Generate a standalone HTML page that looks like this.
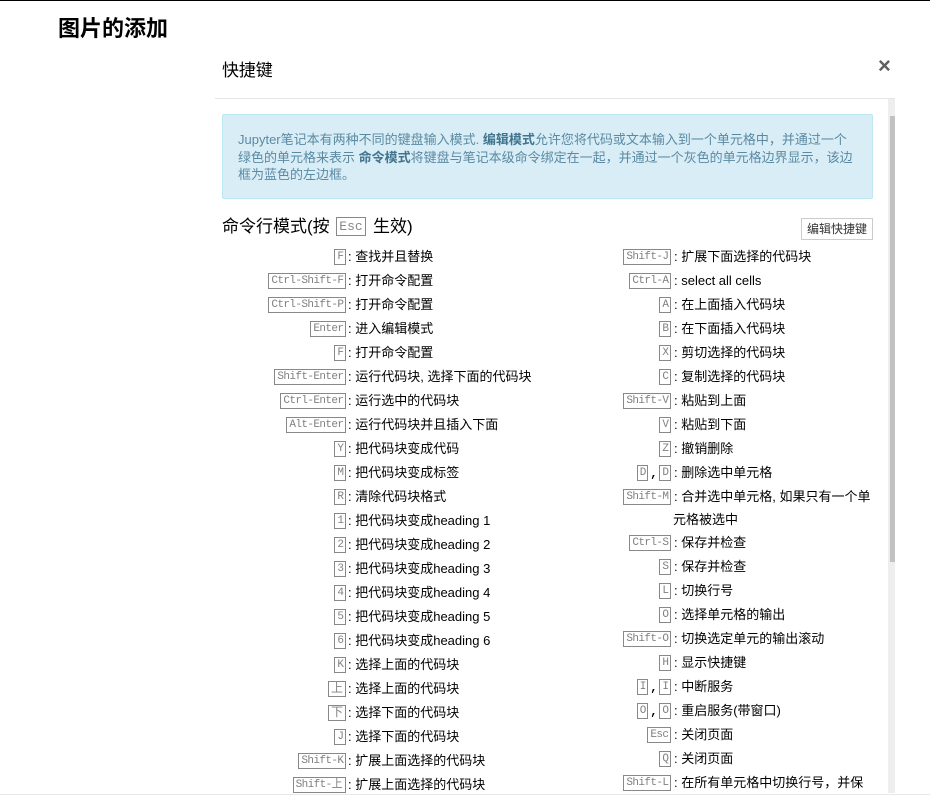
<!DOCTYPE html>
<html lang="zh">
<head>
<meta charset="utf-8">
<title>快捷键</title>
<style>
html,body{margin:0;padding:0;width:930px;height:796px;overflow:hidden;background:#fff}
body{position:relative;font-family:"Liberation Sans","Noto Sans CJK SC",sans-serif;font-size:13px;color:#000}
.abs{position:absolute;white-space:nowrap}
.a,.c{position:absolute;height:24px;line-height:24px;white-space:nowrap}
.a{left:215px}
.c{left:540px}
.a b,.c b{display:inline-block;width:131px;text-align:right;font-weight:normal}
.a b{margin-right:2px}
.c b{margin-right:3px}
kbd{display:inline-block;box-sizing:border-box;height:16px;padding:0 1.6px 0 2px;border:1px solid #888;color:#808080;font:11px/15px "Liberation Mono","Noto Sans CJK SC",monospace;letter-spacing:-.6px;vertical-align:middle;position:relative;top:-1px}
kbd.z{font-size:12px;letter-spacing:0;padding:0 2px}
i{display:inline-block;width:11px;text-align:center;font:bold 12px/14px "Liberation Mono",monospace;color:#000;vertical-align:middle}
</style>
</head>
<body>
<div class="abs" style="left:0;top:0;width:930px;height:1px;background:#000"></div>
<div class="abs" style="left:58px;top:13px;font-size:22px;line-height:32px;font-weight:bold">图片的添加</div>
<div class="abs" style="left:222px;top:59px;font-size:17px;line-height:24px;letter-spacing:-.1px">快捷键</div>
<div class="abs" style="left:878px;top:54px;font-size:22px;line-height:24px;font-weight:bold;color:#5f5f5f">×</div>
<div class="abs" style="left:215px;top:98px;width:680px;height:1px;background:#e5e5e5"></div>
<div class="abs" style="left:888px;top:99px;width:7px;height:697px;background:#eee"></div>
<div class="abs" style="left:890px;top:116px;width:5px;height:446px;background:#c1c1c1"></div>

<div class="abs" style="left:222px;top:114px;width:651px;height:85px;box-sizing:border-box;background:#d9edf7;border:1px solid #bce8f1;border-radius:2px"></div>
<div class="abs" style="left:238px;top:131px;line-height:18px;color:#5a8aa2">Jupyter笔记本有两种不同的键盘输入模式. <strong style="color:#41758d">编辑模式</strong>允许您将代码或文本输入到一个单元格中，并通过一个</div>
<div class="abs" style="left:238px;top:149px;line-height:18px;color:#5a8aa2">绿色的单元格来表示 <strong style="color:#41758d">命令模式</strong>将键盘与笔记本级命令绑定在一起，并通过一个灰色的单元格边界显示，该边</div>
<div class="abs" style="left:238px;top:166px;line-height:18px;color:#5a8aa2">框为蓝色的左边框。</div>

<div class="abs" style="left:222px;top:215px;font-size:17px;line-height:24px">命令行模式(按</div>
<div class="abs" style="left:336px;top:217px;width:30px;height:19px;box-sizing:border-box;border:1px solid #888;color:#888;font:13px/18px 'Liberation Mono',monospace;text-align:center">Esc</div>
<div class="abs" style="left:373px;top:215px;font-size:17px;line-height:24px">生效)</div>
<div class="abs" style="left:801px;top:218px;width:72px;height:22px;box-sizing:border-box;border:1px solid #ccc;color:#333;font-size:12px;line-height:20px;text-align:center">编辑快捷键</div>

<div class="a" style="top:245px"><b><kbd>F</kbd></b>: 查找并且替换</div>
<div class="a" style="top:269px"><b><kbd>Ctrl-Shift-F</kbd></b>: 打开命令配置</div>
<div class="a" style="top:293px"><b><kbd>Ctrl-Shift-P</kbd></b>: 打开命令配置</div>
<div class="a" style="top:317px"><b><kbd>Enter</kbd></b>: 进入编辑模式</div>
<div class="a" style="top:341px"><b><kbd>F</kbd></b>: 打开命令配置</div>
<div class="a" style="top:365px"><b><kbd>Shift-Enter</kbd></b>: 运行代码块, 选择下面的代码块</div>
<div class="a" style="top:389px"><b><kbd>Ctrl-Enter</kbd></b>: 运行选中的代码块</div>
<div class="a" style="top:413px"><b><kbd>Alt-Enter</kbd></b>: 运行代码块并且插入下面</div>
<div class="a" style="top:437px"><b><kbd>Y</kbd></b>: 把代码块变成代码</div>
<div class="a" style="top:461px"><b><kbd>M</kbd></b>: 把代码块变成标签</div>
<div class="a" style="top:485px"><b><kbd>R</kbd></b>: 清除代码块格式</div>
<div class="a" style="top:509px"><b><kbd>1</kbd></b>: 把代码块变成heading 1</div>
<div class="a" style="top:533px"><b><kbd>2</kbd></b>: 把代码块变成heading 2</div>
<div class="a" style="top:557px"><b><kbd>3</kbd></b>: 把代码块变成heading 3</div>
<div class="a" style="top:581px"><b><kbd>4</kbd></b>: 把代码块变成heading 4</div>
<div class="a" style="top:605px"><b><kbd>5</kbd></b>: 把代码块变成heading 5</div>
<div class="a" style="top:629px"><b><kbd>6</kbd></b>: 把代码块变成heading 6</div>
<div class="a" style="top:653px"><b><kbd>K</kbd></b>: 选择上面的代码块</div>
<div class="a" style="top:677px"><b><kbd class="z">上</kbd></b>: 选择上面的代码块</div>
<div class="a" style="top:701px"><b><kbd class="z">下</kbd></b>: 选择下面的代码块</div>
<div class="a" style="top:725px"><b><kbd>J</kbd></b>: 选择下面的代码块</div>
<div class="a" style="top:749px"><b><kbd>Shift-K</kbd></b>: 扩展上面选择的代码块</div>
<div class="a" style="top:773px"><b><kbd style="padding-right:3px">Shift-上</kbd></b>: 扩展上面选择的代码块</div>

<div class="c" style="top:245px"><b><kbd>Shift-J</kbd></b>: 扩展下面选择的代码块</div>
<div class="c" style="top:269px"><b><kbd>Ctrl-A</kbd></b>: select all cells</div>
<div class="c" style="top:293px"><b><kbd>A</kbd></b>: 在上面插入代码块</div>
<div class="c" style="top:317px"><b><kbd>B</kbd></b>: 在下面插入代码块</div>
<div class="c" style="top:341px"><b><kbd>X</kbd></b>: 剪切选择的代码块</div>
<div class="c" style="top:365px"><b><kbd>C</kbd></b>: 复制选择的代码块</div>
<div class="c" style="top:389px"><b><kbd>Shift-V</kbd></b>: 粘贴到上面</div>
<div class="c" style="top:413px"><b><kbd>V</kbd></b>: 粘贴到下面</div>
<div class="c" style="top:437px"><b><kbd>Z</kbd></b>: 撤销删除</div>
<div class="c" style="top:461px"><b><kbd>D</kbd><i>,</i><kbd>D</kbd></b>: 删除选中单元格</div>
<div class="c" style="top:485px"><b><kbd>Shift-M</kbd></b>: 合并选中单元格, 如果只有一个单</div>
<div class="abs" style="left:673px;top:508px;line-height:24px">元格被选中</div>
<div class="c" style="top:531px"><b><kbd>Ctrl-S</kbd></b>: 保存并检查</div>
<div class="c" style="top:555px"><b><kbd>S</kbd></b>: 保存并检查</div>
<div class="c" style="top:579px"><b><kbd>L</kbd></b>: 切换行号</div>
<div class="c" style="top:603px"><b><kbd>O</kbd></b>: 选择单元格的输出</div>
<div class="c" style="top:627px"><b><kbd>Shift-O</kbd></b>: 切换选定单元的输出滚动</div>
<div class="c" style="top:651px"><b><kbd>H</kbd></b>: 显示快捷键</div>
<div class="c" style="top:675px"><b><kbd>I</kbd><i>,</i><kbd>I</kbd></b>: 中断服务</div>
<div class="c" style="top:699px"><b><kbd>O</kbd><i>,</i><kbd>O</kbd></b>: 重启服务(带窗口)</div>
<div class="c" style="top:723px"><b><kbd>Esc</kbd></b>: 关闭页面</div>
<div class="c" style="top:747px"><b><kbd>Q</kbd></b>: 关闭页面</div>
<div class="c" style="top:771px"><b><kbd>Shift-L</kbd></b>: 在所有单元格中切换行号，并保</div>

<div class="abs" style="left:0;top:793px;width:930px;height:3px;background:#fff"></div>
<div class="abs" style="left:0;top:794px;width:930px;height:1px;background:#e8e8e8"></div>
</body>
</html>
